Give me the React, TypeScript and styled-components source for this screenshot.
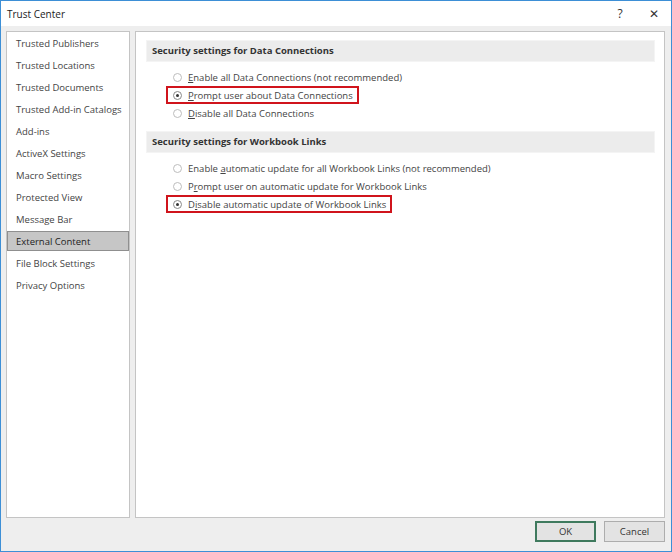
import React from "react";
import styled, { createGlobalStyle } from "styled-components";

const GlobalStyle = createGlobalStyle`
  html, body {
    margin: 0;
    padding: 0;
    background: #ffffff;
  }
  body {
    font-family: "Segoe UI", "Open Sans", "Liberation Sans", sans-serif;
  }
`;

const navItems = [
  "Trusted Publishers",
  "Trusted Locations",
  "Trusted Documents",
  "Trusted Add-in Catalogs",
  "Add-ins",
  "ActiveX Settings",
  "Macro Settings",
  "Protected View",
  "Message Bar",
  "External Content",
  "File Block Settings",
  "Privacy Options",
];

type Opt = { before: string; key: string; after: string; checked?: boolean; marked?: boolean };

const dataOptions: Opt[] = [
  { before: "", key: "E", after: "nable all Data Connections (not recommended)" },
  { before: "", key: "P", after: "rompt user about Data Connections", checked: true, marked: true },
  { before: "", key: "D", after: "isable all Data Connections" },
];

const linkOptions: Opt[] = [
  { before: "Enable ", key: "a", after: "utomatic update for all Workbook Links (not recommended)" },
  { before: "P", key: "r", after: "ompt user on automatic update for Workbook Links" },
  { before: "D", key: "i", after: "sable automatic update of Workbook Links", checked: true, marked: true },
];

const Window = styled.div`
  width: 672px;
  height: 552px;
  box-sizing: border-box;
  border: 1px solid #3d8fd6;
  background: #eeeeee;
  display: flex;
  flex-direction: column;
  color: #444444;
  font-size: 9.5px;
`;

const TitleBar = styled.div`
  height: 25px;
  background: #ffffff;
  display: flex;
  align-items: center;
  padding: 0 0 0 6px;
  color: #222222;
  font-size: 10px;
`;

const Title = styled.div`
  flex: 1;
`;

const TitleButton = styled.div`
  width: 34px;
  text-align: center;
  font-size: 12px;
  color: #333333;
`;

const Body = styled.div`
  flex: 1;
  display: flex;
  gap: 5px;
  padding: 5px 6px 0 5px;
  min-height: 0;
`;

const Nav = styled.div`
  width: 124px;
  box-sizing: border-box;
  background: #ffffff;
  border: 1px solid #c4c4c4;
  display: flex;
  flex-direction: column;
  padding: 1px 0;
`;

const NavItem = styled.div<{ $active?: boolean }>`
  height: 20px;
  margin-bottom: 2px;
  line-height: 20px;
  box-sizing: border-box;
  padding-left: 8px;
  border: 1px solid ${(p) => (p.$active ? "#8f8f8f" : "transparent")};
  background: ${(p) => (p.$active ? "#c6c6c6" : "transparent")};
  color: ${(p) => (p.$active ? "#222222" : "#444444")};
  white-space: nowrap;
`;

const Content = styled.div`
  flex: 1;
  box-sizing: border-box;
  background: #ffffff;
  border: 1px solid #c4c4c4;
  padding: 8px 9px 0 10px;
  display: flex;
  flex-direction: column;
`;

const SectionHeader = styled.div`
  height: 20px;
  line-height: 20px;
  background: #ececec;
  border: 1px solid #f4f4f4;
  padding-left: 5px;
  font-weight: 700;
  color: #333333;
`;

const OptionList = styled.div`
  display: flex;
  flex-direction: column;
  align-items: flex-start;
  padding: 6px 0 9px 20px;
`;

const OptionRow = styled.div<{ $marked?: boolean }>`
  height: 18px;
  box-sizing: border-box;
  display: inline-flex;
  align-items: center;
  gap: 6px;
  padding: 0 4px 0 5px;
  border: 2px solid ${(p) => (p.$marked ? "#d0141c" : "transparent")};
  white-space: nowrap;
`;

const Radio = styled.span<{ $checked?: boolean }>`
  width: 9px;
  height: 9px;
  box-sizing: border-box;
  border-radius: 50%;
  border: 1px solid ${(p) => (p.$checked ? "#8a8a8a" : "#bdbdbd")};
  background: #ffffff;
  display: inline-flex;
  align-items: center;
  justify-content: center;
  &::after {
    content: "";
    width: 3px;
    height: 3px;
    border-radius: 50%;
    background: ${(p) => (p.$checked ? "#333333" : "transparent")};
  }
`;

const Key = styled.span`
  text-decoration: underline;
`;

const Footer = styled.div`
  height: 30px;
  display: flex;
  justify-content: flex-end;
  align-items: flex-start;
  gap: 8px;
  padding: 3px 6px 0 0;
`;

const Button = styled.div<{ $primary?: boolean }>`
  width: 61px;
  height: 21px;
  box-sizing: border-box;
  display: flex;
  align-items: center;
  justify-content: center;
  background: #e3e3e3;
  border: ${(p) => (p.$primary ? "2px solid #3f7a5e" : "1px solid #adadad")};
  color: #333333;
`;

const Section: React.FC<{ title: string; options: Opt[] }> = ({ title, options }) => (
  <>
    <SectionHeader>{title}</SectionHeader>
    <OptionList>
      {options.map((o, i) => (
        <OptionRow key={i} $marked={o.marked}>
          <Radio $checked={o.checked} />
          <span>
            {o.before}
            <Key>{o.key}</Key>
            {o.after}
          </span>
        </OptionRow>
      ))}
    </OptionList>
  </>
);

export default function App() {
  return (
    <>
      <GlobalStyle />
      <Window>
        <TitleBar>
          <Title>Trust Center</Title>
          <TitleButton>?</TitleButton>
          <TitleButton>✕</TitleButton>
        </TitleBar>
        <Body>
          <Nav>
            {navItems.map((n) => (
              <NavItem key={n} $active={n === "External Content"}>
                {n}
              </NavItem>
            ))}
          </Nav>
          <Content>
            <Section title="Security settings for Data Connections" options={dataOptions} />
            <Section title="Security settings for Workbook Links" options={linkOptions} />
          </Content>
        </Body>
        <Footer>
          <Button $primary>OK</Button>
          <Button>Cancel</Button>
        </Footer>
      </Window>
    </>
  );
}
